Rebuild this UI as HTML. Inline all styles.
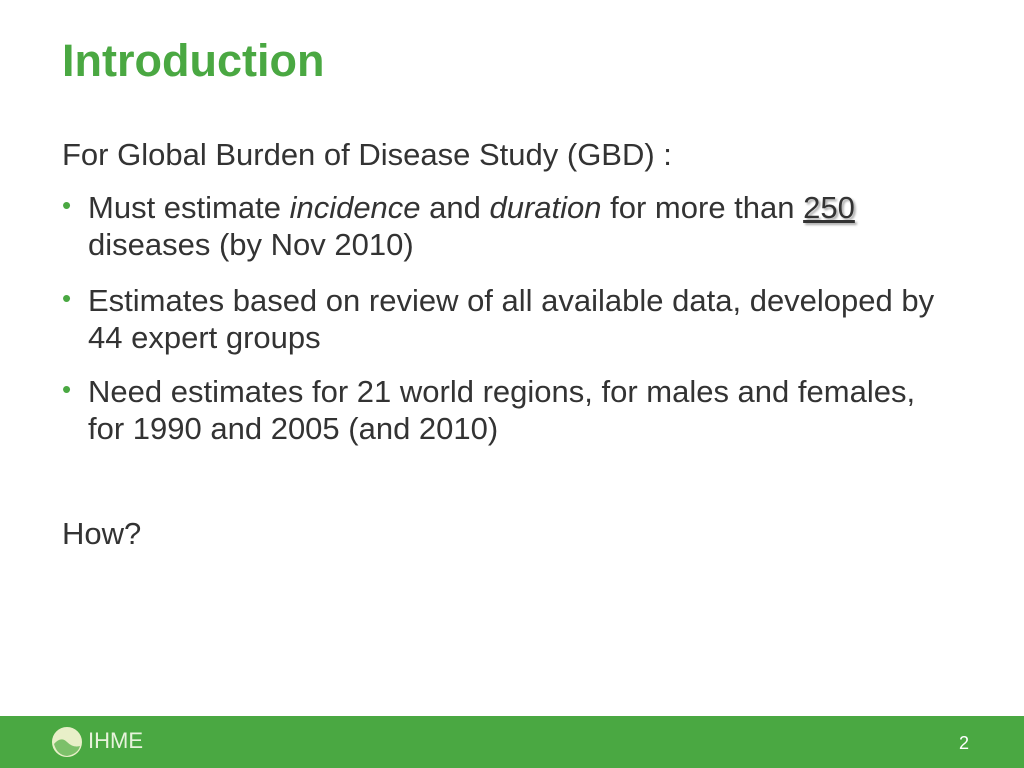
<!DOCTYPE html>
<html><head><style>
body{margin:0;width:1024px;height:768px;position:relative;background:#fff;font-family:"Liberation Sans",sans-serif;color:#333;overflow:hidden}
.t{position:absolute;left:62px;top:35px;font-size:45px;font-weight:bold;color:#4aa842}
.p{position:absolute;left:62px;font-size:31px;line-height:37px;white-space:nowrap}
.b{position:absolute;left:62px;font-size:31px;line-height:37px;white-space:nowrap}
.b .d{position:absolute;left:0;top:-2px;color:#4aa842;font-size:26px}
.b .x{position:absolute;left:26px}
.f{position:absolute;left:0;top:716px;width:1024px;height:52px;background:#4aa842}
</style></head><body>
<div class="t">Introduction</div>
<div class="p" style="top:136px">For Global Burden of Disease Study (GBD) :</div>
<div class="b" style="top:189px"><span class="d">•</span><div class="x">Must estimate <i>incidence</i> and <i>duration</i> for more than <u style="text-shadow:2px 2px 2px #aaa">250</u><br>diseases (by Nov 2010)</div></div>
<div class="b" style="top:282px"><span class="d">•</span><div class="x">Estimates based on review of all available data, developed by<br>44 expert groups</div></div>
<div class="b" style="top:373px"><span class="d">•</span><div class="x">Need estimates for 21 world regions, for males and females,<br>for 1990 and 2005 (and 2010)</div></div>
<div class="p" style="top:515px">How?</div>
<div class="f">
<svg style="position:absolute;left:51px;top:10px" width="32" height="32" viewBox="0 0 32 32"><circle cx="16" cy="16" r="14" fill="#e8efc8" stroke="#e8efc8" stroke-width="2"/><path d="M3 18 Q10 10 16 16 Q22 22 29 20 Q27 28 16 30 Q6 29 3 18Z" fill="#7cc06a"/></svg>
<div style="position:absolute;left:88px;top:12px;color:#e8f3dc;font-size:22px">IHME</div>
<div style="position:absolute;left:959px;top:17px;color:#fff;font-size:18px">2</div>
</div>
</body></html>
